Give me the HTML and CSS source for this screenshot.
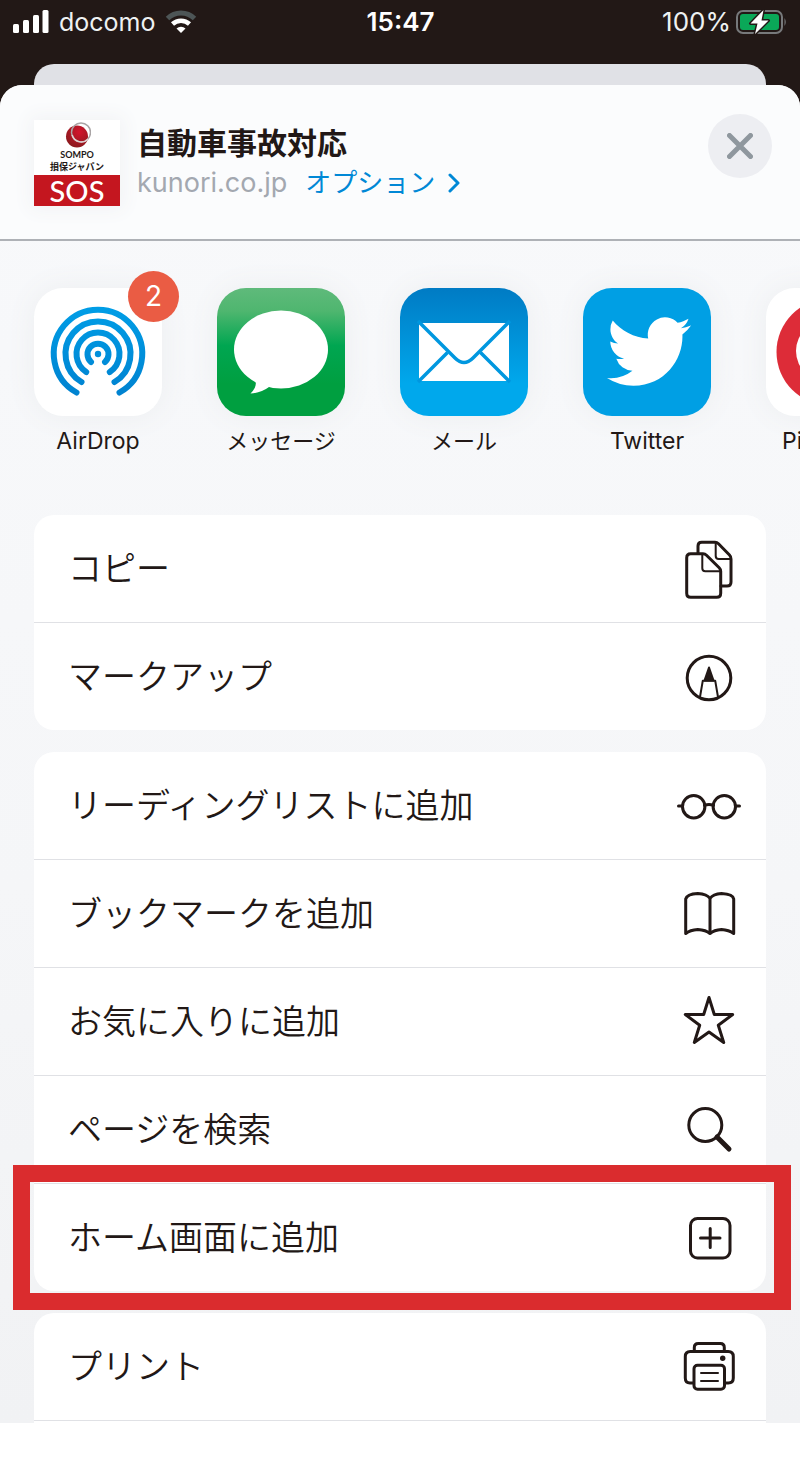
FILE: index.html
```html
<!DOCTYPE html>
<html lang="ja">
<head>
    <meta charset="UTF-8">
    <meta name="viewport" content="width=device-width, initial-scale=1.0">
    <title>自動車事故対応</title>
    <link rel="stylesheet" href="styles.css">
</head>
<body>
    <div class="screen">
        <div class="status-bar">
            <div class="status-left">
                <svg class="signal" viewBox="0 0 36 24" fill="#fff">
                    <rect x="0" y="14" width="6" height="9" rx="1.5"/>
                    <rect x="10" y="10" width="6" height="13" rx="1.5"/>
                    <rect x="20" y="5" width="6" height="18" rx="1.5"/>
                    <rect x="29.500" y="0" width="6" height="23" rx="1.5"/>
                </svg>
                <span>docomo</span>
                <svg class="wifi" viewBox="0 0 32 24">
                    <path d="M2.500 8.500a19.500 19.500 0 0 1 27 0" fill="none" stroke="#4d5556" stroke-width="5"/>
                    <path d="M7.500 14a12.500 12.500 0 0 1 17 0" fill="none" stroke="#fff" stroke-width="4.500"/>
                    <path d="M11.500 18.500a6.500 6.500 0 0 1 9 0L16 23z" fill="#fff"/>
                </svg>
            </div>
            <div class="status-time">15:47</div>
            <div class="status-right">
                <span>100%</span>
                <svg class="battery" viewBox="0 0 52 26">
                    <rect x="1" y="2" width="45" height="22" rx="6" fill="none" stroke="#77797b" stroke-width="2"/>
                    <rect x="4" y="5" width="39" height="16" rx="3" fill="#0aa858"/>
                    <path d="M48.500 9q2.500 4 0 8z" fill="#77797b"/>
                    <path d="M27.500 1L14.500 14.500h7l-2.500 10.500L32.500 11.500h-7z" fill="#fff" stroke="#221816" stroke-width="3" stroke-linejoin="round" paint-order="stroke"/>
                </svg>
            </div>
        </div>

        <div class="back-sheet"></div>

        <div class="sheet">
            <header class="sheet-header">
                <div class="site-icon">
                    <div class="site-logo">
                        <svg viewBox="0 0 28 26">
                            <defs>
                                <radialGradient id="ball" cx="0.6" cy="0.3" r="0.7">
                                    <stop offset="0" stop-color="#d3142c"/>
                                    <stop offset="1" stop-color="#8c1a1e"/>
                                </radialGradient>
                            </defs>
                            <circle cx="14" cy="14.500" r="11" fill="url(#ball)"/>
                            <circle cx="18" cy="10.500" r="9.500" fill="none" stroke="#a9a4a5" stroke-width="1.500"/>
                            <path d="M9.200 13a9.500 9.500 0 0 0 16 4" fill="none" stroke="#e2d2d2" stroke-width="1.500"/>
                        </svg>
                        <span class="site-brand">SOMPO</span>
                        <span class="site-company">損保ジャパン</span>
                    </div>
                    <div class="site-sos">SOS</div>
                </div>
                <div class="site-info">
                    <h1>自動車事故対応</h1>
                    <p>
                        <span class="domain">kunori.co.jp</span>
                        <a href="#">オプション
                            <svg viewBox="0 0 14 20"><path d="M3 2l8 8-8 8" fill="none" stroke="#0088d6" stroke-width="3" stroke-linecap="round" stroke-linejoin="round"/></svg>
                        </a>
                    </p>
                </div>
                <button class="close" aria-label="閉じる">
                    <svg viewBox="0 0 26 26"><path d="M2.500 2.500l21 21M23.500 2.500l-21 21" stroke="#8f979e" stroke-width="5" stroke-linecap="round"/></svg>
                </button>
            </header>

            <div class="apps">
                <button class="app">
                    <span class="app-icon">
                        <svg viewBox="0 0 128 128" fill="none" stroke="url(#air)" stroke-width="6" stroke-linecap="round">
                            <defs>
                                <linearGradient id="air" gradientUnits="userSpaceOnUse" x1="0" y1="20" x2="0" y2="108">
                                    <stop offset="0" stop-color="#009de6"/>
                                    <stop offset="1" stop-color="#0082d0"/>
                                </linearGradient>
                            </defs>
                            <path d="M42.500 104.500A44.200 44.200 0 1 1 85.500 104.500"/>
                            <path d="M47.500 94A32.500 32.500 0 1 1 80.500 94"/>
                            <path d="M52.200 84A21.500 21.500 0 1 1 75.800 84"/>
                            <path d="M57 74A10.500 10.500 0 1 1 71 74"/>
                            <circle cx="64" cy="66" r="3.200" fill="#0090dc" stroke="none"/>
                        </svg>
                    </span>
                    <span class="badge">2</span>
                    <span class="app-name" lang="en">AirDrop</span>
                </button>
                <button class="app">
                    <span class="app-icon messages">
                        <svg viewBox="0 0 128 128" fill="#fff">
                            <ellipse cx="64" cy="61.500" rx="47" ry="39"/>
                            <path d="M37 90Q42 97 33.500 105.500Q44 105 52 99L50 90z"/>
                        </svg>
                    </span>
                    <span class="app-name">メッセージ</span>
                </button>
                <button class="app">
                    <span class="app-icon mail">
                        <svg viewBox="0 0 128 128">
                            <rect x="19" y="35" width="90" height="58" rx="2" fill="#fff"/>
                            <g fill="none" stroke="#0097df" stroke-width="3.500">
                                <path d="M18 33L55 70Q64 79 73 70L110 33"/>
                                <path d="M18 94L47.500 64.500M110 94L80.500 64.500"/>
                            </g>
                        </svg>
                    </span>
                    <span class="app-name">メール</span>
                </button>
                <button class="app">
                    <span class="app-icon twitter">
                        <svg viewBox="0 0 128 128" fill="#fff">
                            <path transform="translate(24 21.500) scale(3.500)" d="M23.953 4.570a10 10 0 0 1-2.825.775 4.958 4.958 0 0 0 2.163-2.723c-.951.555-2.005.959-3.127 1.184a4.920 4.920 0 0 0-8.384 4.482C7.690 8.095 4.067 6.130 1.640 3.162a4.822 4.822 0 0 0-.666 2.475c0 1.710.870 3.213 2.188 4.096a4.904 4.904 0 0 1-2.228-.616v.060a4.923 4.923 0 0 0 3.946 4.827 4.996 4.996 0 0 1-2.212.085 4.936 4.936 0 0 0 4.604 3.417 9.867 9.867 0 0 1-6.102 2.105c-.390 0-.779-.023-1.170-.067a13.995 13.995 0 0 0 7.557 2.209c9.053 0 13.998-7.496 13.998-13.985 0-.210 0-.420-.015-.630A9.935 9.935 0 0 0 24 4.590z"/>
                        </svg>
                    </span>
                    <span class="app-name" lang="en">Twitter</span>
                </button>
                <button class="app">
                    <span class="app-icon">
                        <svg viewBox="0 0 128 128">
                            <circle cx="64" cy="64" r="53.500" fill="#dd2c38"/>
                            <ellipse cx="64" cy="63" rx="34" ry="32" fill="#fff"/>
                        </svg>
                    </span>
                    <span class="app-name" lang="en">Pinterest</span>
                </button>
            </div>

            <ul class="actions">
                <li>
                    <button>
                        <span>コピー</span>
                        <svg viewBox="0 0 64 64">
                            <path d="M21 16V9q0-3.700 3.700-3.700H38q2 0 3.500 1.500L52.500 18Q54 19.500 54 22v23q0 4-4 4h-6"/>
                            <path class="thin" d="M38.700 6v13q0 3 3 3H54"/>
                            <path d="M9.700 20.700q0-4 4-4H26q2 0 3.500 1.500l12.700 12.600q1.500 1.500 1.500 3.500v22q0 4-4 4h-26q-4 0-4-4z"/>
                            <path class="thin" d="M25.300 17v14.300q0 3 3 3h15"/>
                        </svg>
                    </button>
                </li>
                <li>
                    <button>
                        <span>マークアップ</span>
                        <svg viewBox="0 0 64 64">
                            <circle cx="32" cy="33" r="21.800"/>
                            <path class="thin" d="M32 22.500l4.500 13h-9z" fill="#221816"/>
                            <path class="thin" d="M23 52l2.800-16.300h12.400L41 52"/>
                        </svg>
                    </button>
                </li>
            </ul>

            <ul class="actions">
                <li>
                    <button>
                        <span>リーディングリストに追加</span>
                        <svg viewBox="0 0 64 64">
                            <circle cx="16.700" cy="32.700" r="11.200"/>
                            <circle cx="47.300" cy="32.700" r="11.200"/>
                            <path d="M1.500 32h4M58.500 32h4M27.500 31.500q4.500-2 9 0"/>
                        </svg>
                    </button>
                </li>
                <li>
                    <button>
                        <span>ブックマークを追加</span>
                        <svg viewBox="0 0 64 64">
                            <path d="M8.700 51.500V17Q10 12 20.800 11.500 30 12 33 16.500 36 12 44.500 11.500 56 12 56.700 17v34.500Q52 48 44.500 47.500 37 48 33 51.500 29 48 20.800 47.500 13 48 8.700 51.500zM33 16.500v35"/>
                        </svg>
                    </button>
                </li>
                <li>
                    <button>
                        <span>お気に入りに追加</span>
                        <svg viewBox="0 0 64 64">
                            <path d="M32 7.500l5.300 17h18.400L41.300 35.300l5.400 17.200L32 42 17.300 52.500l5.400-17.200L8.300 24.500h18.400z"/>
                        </svg>
                    </button>
                </li>
                <li>
                    <button>
                        <span>ページを検索</span>
                        <svg viewBox="0 0 64 64">
                            <circle cx="28.300" cy="27" r="16.500"/>
                            <path class="thick" d="M40 39l12 12"/>
                        </svg>
                    </button>
                </li>
                <li class="highlight">
                    <button>
                        <span>ホーム画面に追加</span>
                        <svg viewBox="0 0 64 64">
                            <rect x="13.500" y="12.500" width="39.500" height="39.500" rx="7"/>
                            <path d="M33.200 22.500v19M23.500 32h19.500"/>
                        </svg>
                    </button>
                </li>
            </ul>

            <ul class="actions last">
                <li>
                    <button>
                        <span>プリント</span>
                        <svg viewBox="0 0 64 64">
                            <path d="M17.300 16v-3.500q0-4 4-4h22q4 0 4 4V16"/>
                            <path d="M16.500 48H13q-4.700 0-4.700-5V21.500q0-5 5-5h38q5 0 5 5V43q0 5-5 5H48"/>
                            <rect x="17" y="30.300" width="30.500" height="24" rx="3.500"/>
                            <path class="thin" d="M24 38h17M24 46h17"/>
                            <circle cx="45.700" cy="23.300" r="2.700" fill="#221816" stroke="none"/>
                        </svg>
                    </button>
                </li>
            </ul>
        </div>
    </div>
</body>
</html>
```
FILE: styles.css
```css
* {
    box-sizing: border-box;
}
body {
    margin: 0;
    background-color: #fff;
    color: #221816;
    font-family: Inter, "Noto Sans CJK JP", sans-serif;
}
button {
    border: none;
    background: none;
    padding: 0;
    color: inherit;
    font-family: inherit;
    cursor: pointer;
}
.screen {
    background-color: #221816;
}

/* status bar */
.status-bar {
    display: grid;
    grid-template-columns: 1fr auto 1fr;
    align-items: start;
    height: 64px;
    padding: 6px 12px 0 13px;
    color: #eef1f2;
    font-size: 26px;
    line-height: 32px;
}
.status-left,
.status-right {
    display: flex;
    align-items: center;
}
.status-left {
    gap: 10px;
    font-size: 25px;
}
.status-right {
    justify-content: flex-end;
    gap: 5px;
}
.status-time {
    color: #fff;
    font-weight: 600;
}
.signal {
    width: 36px;
    height: 24px;
}
.wifi {
    width: 32px;
    height: 24px;
}
.battery {
    width: 52px;
    height: 26px;
}

/* sheet */
.back-sheet {
    height: 45px;
    margin: 0 34px -24px;
    border-radius: 20px 20px 0 0;
    background-color: #e0e1e6;
}
.sheet {
    position: relative;
    overflow: hidden;
    border-radius: 22px 22px 0 0;
    background: linear-gradient(#f8f9fb, #f5f6f8 60%, #f1f2f4);
}
.sheet-header {
    display: flex;
    align-items: flex-start;
    gap: 17px;
    padding: 29px 28px 33px 34px;
    border-bottom: 2px solid #aeb1b6;
    background-color: #fbfcfd;
}
.site-icon {
    width: 86px;
    margin-top: 6px;
    box-shadow: 0 0 18px 4px #f2f3f5;
    text-align: center;
}
.site-logo {
    display: flex;
    flex-direction: column;
    align-items: center;
    height: 55px;
    padding-top: 2px;
    background-color: #fff;
}
.site-logo svg {
    width: 28px;
    height: 26px;
}
.site-brand {
    font-family: Lato, sans-serif;
    font-size: 9px;
    font-weight: 700;
    line-height: 13px;
}
.site-company {
    font-size: 9px;
    font-weight: 700;
    line-height: 12px;
    white-space: nowrap;
}
.site-sos {
    height: 31px;
    background-color: #c4161f;
    color: #fff;
    font-family: Lato, sans-serif;
    font-size: 29px;
    font-weight: 500;
    line-height: 31px;
}
.site-info {
    flex: 1;
    padding-top: 9px;
}
.site-info h1 {
    margin: 0;
    font-size: 30px;
    font-weight: 700;
    line-height: 40px;
}
.site-info p {
    display: flex;
    gap: 18px;
    margin: 0;
    color: #a3a8b0;
    font-size: 26px;
    line-height: 40px;
}
.domain {
    font-size: 27px;
}
.site-info a {
    display: flex;
    align-items: center;
    gap: 12px;
    color: #0088d6;
    text-decoration: none;
}
.site-info a svg {
    width: 14px;
    height: 20px;
}
.close {
    display: flex;
    align-items: center;
    justify-content: center;
    width: 64px;
    height: 64px;
    border-radius: 50%;
    background-color: #edeef2;
}
.close svg {
    width: 26px;
    height: 26px;
}

/* share targets */
.apps {
    display: flex;
    gap: 55px;
    overflow: hidden;
    padding: 47px 0 58px 34px;
}
.app {
    position: relative;
    flex: 0 0 128px;
}
.app-icon {
    display: block;
    height: 128px;
    border-radius: 29px;
    background-color: #fff;
    box-shadow: 0 0 30px #eceef0;
}
.app-icon svg {
    display: block;
}
.messages {
    background: linear-gradient(#5fba7b, #4fb66f 18%, #00a651 45%, #009f40 75%);
}
.mail {
    background: linear-gradient(#007bc4, #00a8ec 75%);
}
.twitter {
    background-color: #009fe4;
}
.app-name {
    display: block;
    margin-top: 9px;
    font-size: 22px;
    line-height: 32px;
    white-space: nowrap;
}
.app-name:lang(en) {
    font-size: 23px;
}
.badge {
    position: absolute;
    top: -17px;
    right: -17px;
    width: 51px;
    height: 51px;
    border-radius: 50%;
    background-color: #ea5c44;
    color: #fff;
    font-size: 28px;
    line-height: 51px;
}

/* action lists */
.actions {
    margin: 0 34px 22px;
    padding: 0;
    border-radius: 20px;
    background-color: #fff;
    list-style: none;
}
.actions li + li {
    border-top: 1px solid #e0e1e5;
}
.actions button {
    display: flex;
    align-items: center;
    justify-content: space-between;
    width: 100%;
    height: 107px;
    padding: 0 25px 0 34px;
    font-size: 34px;
    font-weight: 350;
    text-align: left;
}
.actions span {
    padding-bottom: 4px;
}
.actions svg {
    width: 64px;
    height: 64px;
    fill: none;
    stroke: #221816;
    stroke-width: 3px;
    stroke-linecap: round;
    stroke-linejoin: round;
}
.actions .thin {
    stroke-width: 2px;
}
.actions .thick {
    stroke-width: 5px;
}
.actions.last {
    margin-bottom: 0;
    padding-bottom: 2px;
    border-radius: 20px 20px 0 0;
}
.actions.last li {
    border-bottom: 1px solid #e0e1e5;
}
.highlight {
    position: relative;
}
.highlight::after {
    content: "";
    position: absolute;
    inset: -19px -25px -19px -21px;
    border: 17px solid #da2c2e;
    pointer-events: none;
}
```
